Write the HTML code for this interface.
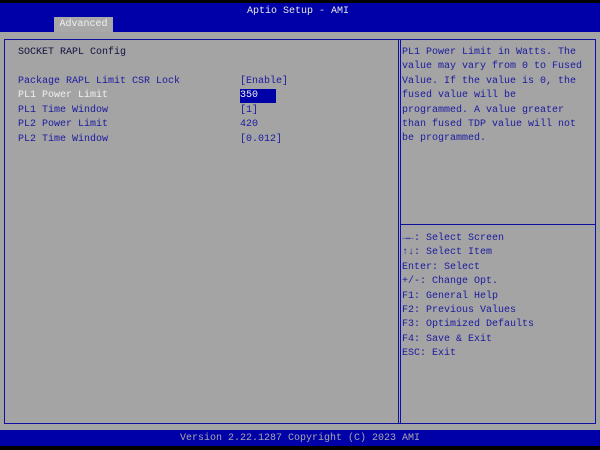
<!DOCTYPE html><html><head><style>
body{margin:0;width:600px;height:450px;background:#000;position:relative;overflow:hidden;font-family:"Liberation Mono","DejaVu Sans Mono",monospace;font-size:10px;}
div{position:absolute;white-space:pre;}
.t{color:#1a1aa0;}
</style></head><body>
<div style="left:0;top:3px;width:600px;height:29px;background:#0000a8"></div>
<div style="left:247px;top:5px;color:#e8e8e8;line-height:14px">Aptio Setup - AMI</div>
<div style="left:54px;top:17px;width:59px;height:15px;background:#a8a8a8;color:#f0f0f0;line-height:15px;text-align:center">Advanced</div>
<div style="left:0;top:32px;width:600px;height:398px;background:#a4a4a4"></div>
<div style="left:4px;top:39px;width:590px;height:383px;border:1px solid #1010a0"></div>
<div style="left:398px;top:39px;width:1px;height:385px;background:#1010a0"></div>
<div style="left:400px;top:39px;width:1px;height:385px;background:#1010a0"></div>
<div style="left:401px;top:224px;width:194px;height:1px;background:#1010a0"></div>
<div style="left:18px;top:46px;color:#101040;line-height:14px">SOCKET RAPL Config</div>
<div class="t" style="left:18px;top:75px;line-height:14.4px">Package RAPL Limit CSR Lock
<span style="color:#f0f0f0">PL1 Power Limit</span>
PL1 Time Window
PL2 Power Limit
PL2 Time Window</div>
<div style="left:240px;top:89px;width:36px;height:14px;background:#0000a8"></div>
<div class="t" style="left:240px;top:75px;line-height:14.4px">[Enable]
<span style="color:#f0f0f0">350</span>
[1]
420
[0.012]</div>
<div class="t" style="left:402px;top:46px;line-height:14.4px">PL1 Power Limit in Watts. The
value may vary from 0 to Fused
Value. If the value is 0, the
fused value will be
programmed. A value greater
than fused TDP value will not
be programmed.</div>
<div class="t" style="left:402px;top:232px;line-height:14.4px">→←: Select Screen
↑↓: Select Item
Enter: Select
+/-: Change Opt.
F1: General Help
F2: Previous Values
F3: Optimized Defaults
F4: Save &amp; Exit
ESC: Exit</div>
<div style="left:0;top:430px;width:600px;height:16px;background:#0000a8"></div>
<div style="left:180px;top:432px;color:#a8a8a8;line-height:13px">Version 2.22.1287 Copyright (C) 2023 AMI</div>
</body></html>
